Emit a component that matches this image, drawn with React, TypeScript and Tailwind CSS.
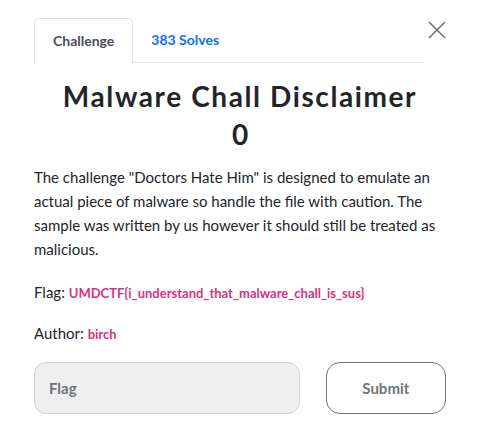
export default function App() {
  return (
    <div className="relative h-[427px] w-[480px] bg-white font-['Lato',sans-serif] text-[#212529]">
      <button
        type="button"
        className="absolute right-[34px] top-[21px] text-[#6c757d]"
        aria-label="Close"
      >
        <svg width="18" height="18" viewBox="0 0 18 18" fill="none" stroke="currentColor" strokeWidth="1.6">
          <path d="M1 1L17 17M17 1L1 17" />
        </svg>
      </button>

      <div className="px-[34px] pt-[18px]">
        <ul className="mr-[22px] flex border-b border-[#dee2e6] text-[14px] font-bold">
          <li className="-mb-px rounded-t-[5px] border border-[#dee2e6] border-b-white bg-white px-[18px] py-[11px] text-[#495057]">
            Challenge
          </li>
          <li className="px-[18px] py-[11px] text-[#0d6efd]">383 Solves</li>
        </ul>

        <div className="pt-[14px] text-center">
          <h1 className="text-[28px] font-bold leading-[38px] tracking-[1.6px]">Malware Chall Disclaimer</h1>
          <div className="text-[28px] font-bold leading-[38px]">0</div>
        </div>

        <p className="mt-[12px] text-[15px] leading-[24px]">
          The challenge "Doctors Hate Him" is designed to emulate an actual piece of malware so
          handle the file with caution. The sample was written by us however it should still be
          treated as malicious.
        </p>

        <p className="mt-[19px] text-[15px] leading-[24px]">
          Flag: <span className="text-[13px] font-bold text-[#d63384]">UMDCTF{'{'}i_understand_that_malware_chall_is_sus{'}'}</span>
        </p>

        <p className="mt-[16px] text-[15px] leading-[24px]">
          Author: <span className="text-[13px] font-bold text-[#d63384]">birch</span>
        </p>

        <div className="mt-[16px] flex items-center gap-[26px]">
          <input
            placeholder="Flag"
            className="h-[52px] w-[267px] rounded-[12px] border border-[#ced4da] bg-[#efefef] px-[14px] text-[15px] font-bold placeholder:text-[#6c757d] focus:outline-none"
          />
          <button
            type="button"
            className="h-[52px] w-[121px] rounded-[14px] border border-[#6c757d] bg-white text-[15px] font-bold text-[#6c757d]"
          >
            Submit
          </button>
        </div>
      </div>
    </div>
  );
}
